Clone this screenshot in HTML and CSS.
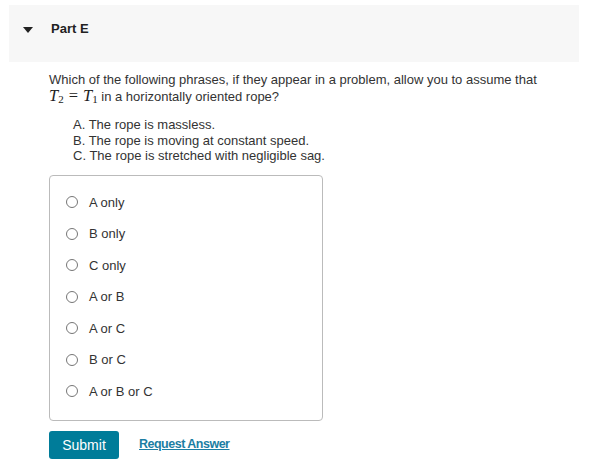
FILE: index.html
```html
<!DOCTYPE html>
<html>
<head>
<meta charset="utf-8">
<link rel="stylesheet" href="styles.css">
</head>
<body>
<div class="page">
  <div class="part-header">
    <span class="caret"></span>
    <span class="part-title">Part E</span>
  </div>
  <div class="content">
    <p class="question">Which of the following phrases, if they appear in a problem, allow you to assume that <span class="math"><i>T</i><sub>2</sub><span class="eq">=</span><i>T</i><sub>1</sub></span> in a horizontally oriented rope?</p>
    <ul class="statements">
      <li>A. The rope is massless.</li>
      <li>B. The rope is moving at constant speed.</li>
      <li>C. The rope is stretched with negligible sag.</li>
    </ul>
    <div class="choices">
      <label class="choice"><span class="radio"></span>A only</label>
      <label class="choice"><span class="radio"></span>B only</label>
      <label class="choice"><span class="radio"></span>C only</label>
      <label class="choice"><span class="radio"></span>A or B</label>
      <label class="choice"><span class="radio"></span>A or C</label>
      <label class="choice"><span class="radio"></span>B or C</label>
      <label class="choice"><span class="radio"></span>A or B or C</label>
    </div>
    <div class="actions">
      <button class="submit">Submit</button>
      <a class="request" href="#">Request Answer</a>
    </div>
  </div>
</div>
</body>
</html>
```
FILE: styles.css
```css
html, body {
  margin: 0;
  padding: 0;
  background: #ffffff;
}
body {
  font-family: "Liberation Sans", Arial, sans-serif;
  color: #333333;
  font-size: 13px;
}
.page {
  margin: 5px 15px 0 9px;
}
.part-header {
  background: #f7f7f7;
  height: 57px;
  display: flex;
  align-items: flex-start;
  padding-top: 16px;
  box-sizing: border-box;
}
.caret {
  width: 0;
  height: 0;
  border-left: 5.5px solid transparent;
  border-right: 5.5px solid transparent;
  border-top: 6px solid #222222;
  margin: 6px 0 0 14px;
}
.part-title {
  font-weight: bold;
  font-size: 13px;
  color: #222222;
  margin-left: 18px;
  line-height: 16px;
}
.content {
  padding-left: 40px;
}
.question {
  margin: 10px 0 0 0;
  line-height: 16px;
  width: 500px;
}
.math {
  font-family: "Liberation Serif", "Times New Roman", serif;
  font-size: 16.5px;
  color: #222;
  white-space: nowrap;
}
.math i {
  font-style: italic;
}
.math sub {
  font-size: 11px;
  font-style: normal;
  vertical-align: -2px;
  line-height: 0;
}
.eq {
  padding: 0 5px;
}
.statements {
  list-style: none;
  margin: 12px 0 0 24px;
  padding: 0;
}
.statements li {
  line-height: 15.5px;
}
.choices {
  width: 274px;
  box-sizing: border-box;
  margin-top: 11px;
  border: 1px solid #bbbbbb;
  border-radius: 4px;
  padding: 11px 0 13px;
  display: flex;
  flex-direction: column;
}
.choice {
  height: 31.5px;
  display: flex;
  align-items: center;
  padding-left: 16px;
  color: #333;
}
.radio {
  width: 10px;
  height: 10px;
  border: 1px solid #767676;
  border-radius: 50%;
  margin-right: 11px;
  background: #fff;
}
.actions {
  margin-top: 10px;
  display: flex;
  align-items: center;
}
.submit {
  width: 70px;
  height: 28px;
  background: #007c99;
  color: #ffffff;
  border: none;
  border-radius: 3px;
  font-family: "Liberation Sans", Arial, sans-serif;
  font-size: 14px;
  padding: 0;
}
.request {
  margin-left: 20px;
  color: #1b7ea3;
  font-weight: bold;
  font-size: 12.5px;
  letter-spacing: -0.5px;
  text-decoration: underline;
  margin-top: -2px;
}
```
